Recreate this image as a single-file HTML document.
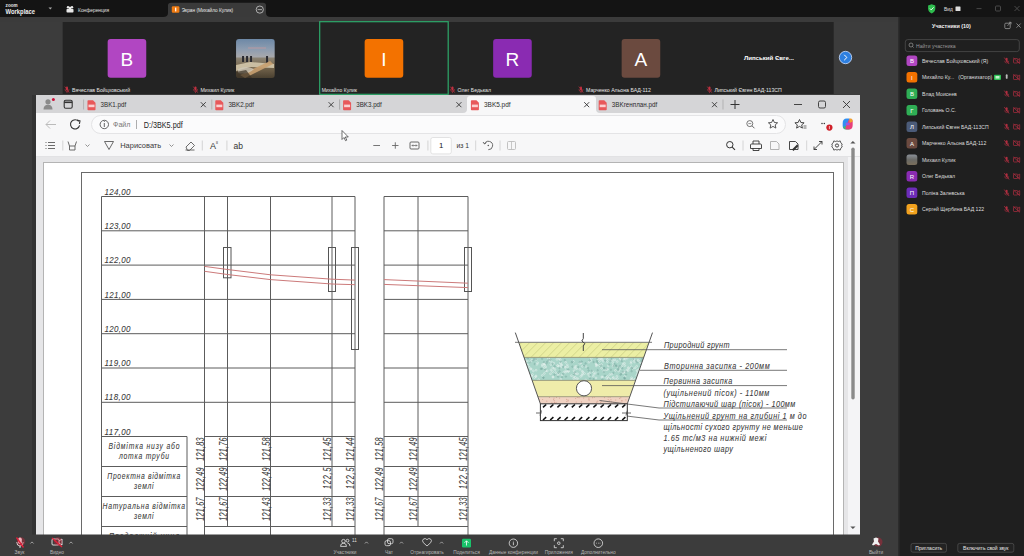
<!DOCTYPE html>
<html><head><meta charset="utf-8">
<style>
*{margin:0;padding:0;box-sizing:border-box}
html,body{width:1024px;height:556px;overflow:hidden;background:#3c3c3c;font-family:"Liberation Sans",sans-serif}
.a{position:absolute;left:0;top:0}
.t{font-family:"Liberation Sans",sans-serif;font-style:italic;fill:#3a3a3a;stroke:#3a3a3a;stroke-width:0.06px}
</style></head><body>
<svg class="a" width="1024" height="556" viewBox="0 0 1024 556">
<rect x="0" y="0" width="1024" height="556" fill="#3c3c3c"/>
<rect x="0" y="0" width="1024" height="17" fill="#141414"/>
<text x="5.6" y="6.8" font-size="5.4" fill="#e8e8e8" font-family="Liberation Sans" font-weight="bold" textLength="12" lengthAdjust="spacingAndGlyphs">zoom</text>
<text x="5.6" y="14" font-size="7" fill="#f0f0f0" font-family="Liberation Sans" font-weight="bold" textLength="29.5" lengthAdjust="spacingAndGlyphs">Workplace</text>
<path d="M48.5,7.6 l1.8,1.8 1.8,-1.8z" fill="#aaa"/>
<g fill="#e8e8e8"><circle cx="68" cy="7.3" r="1.2"/><circle cx="72" cy="7.3" r="1.2"/><rect x="66.5" y="9" width="7" height="3.6" rx="0.8"/><rect x="68.7" y="6.8" width="2.6" height="2.6" rx="0.5"/></g>
<text x="78.1" y="11.7" font-size="6" fill="#e0e0e0" font-family="Liberation Sans" textLength="31" lengthAdjust="spacingAndGlyphs">Конференция</text>
<path d="M163,17 Q168,17 168,13 L168,5.5 Q168,2.8 171,2.8 L263,2.8 Q266,2.8 266,5.5 L266,13 Q266,17 271,17 Z" fill="#3a3a3a"/>
<rect x="171.8" y="6.2" width="7.6" height="6.6" rx="1.2" fill="#f07b12"/><rect x="175.1" y="7.6" width="1.2" height="3.8" fill="#fff"/>
<text x="181.7" y="11.8" font-size="6" fill="#e8e8e8" font-family="Liberation Sans" textLength="51.5" lengthAdjust="spacingAndGlyphs">Экран (Михайло Кулик)</text>
<circle cx="259.8" cy="9.6" r="3.6" fill="none" stroke="#bbb" stroke-width="0.9"/><line x1="257.6" y1="9.6" x2="262" y2="9.6" stroke="#bbb" stroke-width="0.8"/>
<path d="M931.7,4.2 l3.6,1.3 v3 q0,3.4 -3.6,5 q-3.6,-1.6 -3.6,-5 v-3z" fill="#2ebd4e"/><path d="M930,8.6 l1.2,1.3 2.4,-2.6" fill="none" stroke="#fff" stroke-width="0.9"/>
<text x="944" y="10.8" font-size="5.8" fill="#e0e0e0" font-family="Liberation Sans" textLength="8.7" lengthAdjust="spacingAndGlyphs">Вид</text>
<rect x="955.5" y="6.5" width="5" height="4.5" rx="0.5" fill="#ddd"/>
<line x1="976.5" y1="8.6" x2="981.5" y2="8.6" stroke="#555" stroke-width="0.8"/>
<rect x="995.5" y="6" width="5" height="5" rx="1" fill="none" stroke="#555" stroke-width="0.8"/>
<path d="M1014.5,6 l5,5 m0,-5 l-5,5" stroke="#555" stroke-width="0.8"/>
<rect x="0" y="17" width="898" height="5" fill="#3b3b3b"/>
<rect x="62.7" y="22" width="771" height="72" fill="#232323"/>
<rect x="107.65" y="39" width="38.6" height="38.8" rx="3" fill="#b146c2"/>
<text x="126.95" y="65.5" font-size="19" fill="#fff" font-family="Liberation Sans" text-anchor="middle">B</text>
<g transform="translate(67.0,89.6)"><rect x="-1" y="-3" width="2" height="4" rx="1" fill="#c23040"/><path d="M-2,-0.5 q0,2.5 2,2.5 q2,0 2,-2.5 M0,2 v1.5" fill="none" stroke="#c23040" stroke-width="0.6"/><line x1="-2.2" y1="-3" x2="2.2" y2="3" stroke="#c23040" stroke-width="0.7"/></g>
<text x="72.0" y="91.8" font-size="5.2" fill="#e6e6e6" font-family="Liberation Sans">Вячеслав Бойцховський</text>
<defs><linearGradient id="ph" x1="0" y1="0" x2="0" y2="1"><stop offset="0" stop-color="#6d88a6"/><stop offset="0.25" stop-color="#8c9cb0"/><stop offset="0.45" stop-color="#a6a8ac"/><stop offset="0.5" stop-color="#8a8272"/><stop offset="0.7" stop-color="#7a6a50"/><stop offset="1" stop-color="#4a4030"/></linearGradient><clipPath id="phc"><rect x="236.0" y="39" width="38.8" height="39" rx="3"/></clipPath></defs>
<g clip-path="url(#phc)">
<rect x="236.04999999999998" y="39" width="38.8" height="39" fill="url(#ph)"/>
<path d="M248.04999999999998,48 h18" stroke="#c09aa0" stroke-width="1.5" opacity="0.6"/>
<path d="M243.04999999999998,62 v-6 M247.04999999999998,62 v-6 M251.04999999999998,62 v-6 M267.04999999999995,63 v-7" stroke="#2a2a30" stroke-width="2"/>
<path d="M236.04999999999998,65 l14,-3 24,2 v4 l-24,-1 -14,4z" fill="#d8cdb0" opacity="0.85"/>
<path d="M240.04999999999998,75 l30,-14 3,3 -28,14z" fill="#c8a070" opacity="0.9"/>
<path d="M238.04999999999998,69 q8,-4 16,0 q-6,6 -16,4z" fill="#d0c8b8" opacity="0.8"/>
<path d="M236.04999999999998,72 l10,-2 6,8 h-16z" fill="#3a3024" opacity="0.7"/>
</g>
<g transform="translate(195.5,89.6)"><rect x="-1" y="-3" width="2" height="4" rx="1" fill="#c23040"/><path d="M-2,-0.5 q0,2.5 2,2.5 q2,0 2,-2.5 M0,2 v1.5" fill="none" stroke="#c23040" stroke-width="0.6"/><line x1="-2.2" y1="-3" x2="2.2" y2="3" stroke="#c23040" stroke-width="0.7"/></g>
<text x="200.5" y="91.8" font-size="5.2" fill="#e6e6e6" font-family="Liberation Sans">Михаил Кулик</text>
<rect x="364.65" y="39" width="38.6" height="38.8" rx="3" fill="#f37200"/>
<text x="383.95" y="65.5" font-size="19" fill="#fff" font-family="Liberation Sans" text-anchor="middle">I</text>
<text x="321.7" y="91.8" font-size="5.2" fill="#e6e6e6" font-family="Liberation Sans" textLength="35.2" lengthAdjust="spacingAndGlyphs">Михайло Кулик</text>
<rect x="493.15000000000003" y="39" width="38.6" height="38.8" rx="3" fill="#8a2bb2"/>
<text x="512.45" y="65.5" font-size="19" fill="#fff" font-family="Liberation Sans" text-anchor="middle">R</text>
<g transform="translate(452.5,89.6)"><rect x="-1" y="-3" width="2" height="4" rx="1" fill="#c23040"/><path d="M-2,-0.5 q0,2.5 2,2.5 q2,0 2,-2.5 M0,2 v1.5" fill="none" stroke="#c23040" stroke-width="0.6"/><line x1="-2.2" y1="-3" x2="2.2" y2="3" stroke="#c23040" stroke-width="0.7"/></g>
<text x="457.5" y="91.8" font-size="5.2" fill="#e6e6e6" font-family="Liberation Sans">Олег Бедькал</text>
<rect x="621.6500000000001" y="39" width="38.6" height="38.8" rx="3" fill="#6b4a3f"/>
<text x="640.95" y="65.5" font-size="19" fill="#fff" font-family="Liberation Sans" text-anchor="middle">A</text>
<g transform="translate(581.0,89.6)"><rect x="-1" y="-3" width="2" height="4" rx="1" fill="#c23040"/><path d="M-2,-0.5 q0,2.5 2,2.5 q2,0 2,-2.5 M0,2 v1.5" fill="none" stroke="#c23040" stroke-width="0.6"/><line x1="-2.2" y1="-3" x2="2.2" y2="3" stroke="#c23040" stroke-width="0.7"/></g>
<text x="586.0" y="91.8" font-size="5.2" fill="#e6e6e6" font-family="Liberation Sans">Марченко Альона БАД-112</text>
<g transform="translate(709.5,89.6)"><rect x="-1" y="-3" width="2" height="4" rx="1" fill="#c23040"/><path d="M-2,-0.5 q0,2.5 2,2.5 q2,0 2,-2.5 M0,2 v1.5" fill="none" stroke="#c23040" stroke-width="0.6"/><line x1="-2.2" y1="-3" x2="2.2" y2="3" stroke="#c23040" stroke-width="0.7"/></g>
<text x="714.5" y="91.8" font-size="5.2" fill="#e6e6e6" font-family="Liberation Sans">Липський Євген БАД-113СП</text>
<text x="769" y="60.3" font-size="6.1" fill="#fff" font-family="Liberation Sans" font-weight="bold" text-anchor="middle">Липський Євге...</text>
<rect x="319.7" y="21.7" width="128.5" height="72.6" fill="none" stroke="#2da86a" stroke-width="1.2"/>
<circle cx="845.5" cy="57.5" r="6.2" fill="#2d7fe0" stroke="#cfe0ff" stroke-width="0.8"/><path d="M844.2,54.8 l2.7,2.7 -2.7,2.7" fill="none" stroke="#fff" stroke-width="1"/>
<rect x="32" y="95" width="4" height="440" fill="#333"/>
<svg x="36" y="95" width="824" height="440" viewBox="36 95 824 440">
<rect x="36" y="95" width="824" height="440" fill="#e6e6e8"/>
<rect x="43.5" y="162.5" width="800" height="400" fill="#fff" stroke="#b4b4b4" stroke-width="1"/>
<rect x="848" y="157" width="12" height="378" fill="#f4f4f6"/>
<rect x="81.5" y="172.5" width="752" height="400" fill="none" stroke="#6a6a6a" stroke-width="1"/>
<line x1="101.5" y1="196.5" x2="355" y2="196.5" stroke="#5c5c5c" stroke-width="1"/>
<line x1="384" y1="196.5" x2="468" y2="196.5" stroke="#5c5c5c" stroke-width="1"/>
<line x1="101.5" y1="230.8" x2="355" y2="230.8" stroke="#5c5c5c" stroke-width="1"/>
<line x1="384" y1="230.8" x2="468" y2="230.8" stroke="#5c5c5c" stroke-width="1"/>
<line x1="101.5" y1="265.1" x2="355" y2="265.1" stroke="#5c5c5c" stroke-width="1"/>
<line x1="384" y1="265.1" x2="468" y2="265.1" stroke="#5c5c5c" stroke-width="1"/>
<line x1="101.5" y1="299.4" x2="355" y2="299.4" stroke="#5c5c5c" stroke-width="1"/>
<line x1="384" y1="299.4" x2="468" y2="299.4" stroke="#5c5c5c" stroke-width="1"/>
<line x1="101.5" y1="333.7" x2="355" y2="333.7" stroke="#5c5c5c" stroke-width="1"/>
<line x1="384" y1="333.7" x2="468" y2="333.7" stroke="#5c5c5c" stroke-width="1"/>
<line x1="101.5" y1="368.0" x2="355" y2="368.0" stroke="#5c5c5c" stroke-width="1"/>
<line x1="384" y1="368.0" x2="468" y2="368.0" stroke="#5c5c5c" stroke-width="1"/>
<line x1="101.5" y1="402.3" x2="355" y2="402.3" stroke="#5c5c5c" stroke-width="1"/>
<line x1="384" y1="402.3" x2="468" y2="402.3" stroke="#5c5c5c" stroke-width="1"/>
<line x1="101.5" y1="436.5" x2="187" y2="436.5" stroke="#5c5c5c" stroke-width="1"/>
<line x1="204.5" y1="436.5" x2="355" y2="436.5" stroke="#5c5c5c" stroke-width="1"/>
<line x1="384" y1="436.5" x2="468" y2="436.5" stroke="#5c5c5c" stroke-width="1"/>
<line x1="101.5" y1="466.5" x2="187" y2="466.5" stroke="#5c5c5c" stroke-width="1"/>
<line x1="204.5" y1="466.5" x2="355" y2="466.5" stroke="#5c5c5c" stroke-width="1"/>
<line x1="384" y1="466.5" x2="468" y2="466.5" stroke="#5c5c5c" stroke-width="1"/>
<line x1="101.5" y1="496.5" x2="187" y2="496.5" stroke="#5c5c5c" stroke-width="1"/>
<line x1="204.5" y1="496.5" x2="355" y2="496.5" stroke="#5c5c5c" stroke-width="1"/>
<line x1="384" y1="496.5" x2="468" y2="496.5" stroke="#5c5c5c" stroke-width="1"/>
<line x1="101.5" y1="526.5" x2="187" y2="526.5" stroke="#5c5c5c" stroke-width="1"/>
<line x1="204.5" y1="526.5" x2="355" y2="526.5" stroke="#5c5c5c" stroke-width="1"/>
<line x1="384" y1="526.5" x2="468" y2="526.5" stroke="#5c5c5c" stroke-width="1"/>
<line x1="101.5" y1="196.5" x2="101.5" y2="560" stroke="#5c5c5c" stroke-width="1"/>
<line x1="187" y1="436.5" x2="187" y2="560" stroke="#5c5c5c" stroke-width="1"/>
<line x1="204.5" y1="196.5" x2="204.5" y2="560" stroke="#5c5c5c" stroke-width="1"/>
<line x1="227.5" y1="196.5" x2="227.5" y2="526.5" stroke="#5c5c5c" stroke-width="1"/>
<line x1="270.5" y1="196.5" x2="270.5" y2="560" stroke="#5c5c5c" stroke-width="1"/>
<line x1="332" y1="196.5" x2="332" y2="526.5" stroke="#5c5c5c" stroke-width="1"/>
<line x1="355" y1="196.5" x2="355" y2="560" stroke="#5c5c5c" stroke-width="1"/>
<line x1="384" y1="196.5" x2="384" y2="560" stroke="#5c5c5c" stroke-width="1"/>
<line x1="418" y1="196.5" x2="418" y2="526.5" stroke="#5c5c5c" stroke-width="1"/>
<line x1="468" y1="196.5" x2="468" y2="560" stroke="#5c5c5c" stroke-width="1"/>
<rect x="223.5" y="247.5" width="7.5" height="30.30000000000001" fill="none" stroke="#555" stroke-width="1"/>
<rect x="328.5" y="247.5" width="7.0" height="44.0" fill="none" stroke="#555" stroke-width="1"/>
<rect x="351.5" y="247.5" width="7.0" height="102.0" fill="none" stroke="#555" stroke-width="1"/>
<rect x="464.5" y="247.5" width="7.0" height="44.0" fill="none" stroke="#555" stroke-width="1"/>
<polyline points="204.5,266.4 227.5,269.5 270.5,274.8 332,279.2 355,280.1" fill="none" stroke="#cc7a7a" stroke-width="1"/>
<polyline points="204.5,271.3 227.5,274.5 270.5,279.6 332,284 355,284.7" fill="none" stroke="#cc7a7a" stroke-width="1"/>
<polyline points="384,279.6 468,283.2" fill="none" stroke="#cc7a7a" stroke-width="1"/>
<polyline points="384,284.4 468,287.6" fill="none" stroke="#cc7a7a" stroke-width="1"/>
<text transform="translate(104.5,194.6) scale(1,1.22)" class="t" stroke-width="0.2" font-size="8" textLength="26" lengthAdjust="spacing">124,00</text>
<text transform="translate(104.5,228.9) scale(1,1.22)" class="t" stroke-width="0.2" font-size="8" textLength="26" lengthAdjust="spacing">123,00</text>
<text transform="translate(104.5,263.20000000000005) scale(1,1.22)" class="t" stroke-width="0.2" font-size="8" textLength="26" lengthAdjust="spacing">122,00</text>
<text transform="translate(104.5,297.5) scale(1,1.22)" class="t" stroke-width="0.2" font-size="8" textLength="26" lengthAdjust="spacing">121,00</text>
<text transform="translate(104.5,331.8) scale(1,1.22)" class="t" stroke-width="0.2" font-size="8" textLength="26" lengthAdjust="spacing">120,00</text>
<text transform="translate(104.5,366.1) scale(1,1.22)" class="t" stroke-width="0.2" font-size="8" textLength="26" lengthAdjust="spacing">119,00</text>
<text transform="translate(104.5,400.40000000000003) scale(1,1.22)" class="t" stroke-width="0.2" font-size="8" textLength="26" lengthAdjust="spacing">118,00</text>
<text transform="translate(104.5,434.6) scale(1,1.22)" class="t" stroke-width="0.2" font-size="8" textLength="26" lengthAdjust="spacing">117,00</text>
<text transform="translate(108.5,448.5) scale(1,1.22)" class="t" font-size="6.8" textLength="71" lengthAdjust="spacing">Відмітка низу або</text>
<text transform="translate(119.0,458.5) scale(1,1.22)" class="t" font-size="6.8" textLength="50" lengthAdjust="spacing">лотка труби</text>
<text transform="translate(107.30000000000001,479) scale(1,1.22)" class="t" font-size="6.8" textLength="73" lengthAdjust="spacing">Проектна відмітка</text>
<text transform="translate(134.05,488.5) scale(1,1.22)" class="t" font-size="6.8" textLength="19.5" lengthAdjust="spacing">землі</text>
<text transform="translate(102.55000000000001,509) scale(1,1.22)" class="t" font-size="6.8" textLength="82.5" lengthAdjust="spacing">Натуральна відмітка</text>
<text transform="translate(134.05,518.5) scale(1,1.22)" class="t" font-size="6.8" textLength="19.5" lengthAdjust="spacing">землі</text>
<text transform="translate(109.0,539) scale(1,1.22)" class="t" font-size="6.8" textLength="70" lengthAdjust="spacing">Поздовжній ухил</text>
<text transform="translate(203.7,437.5) rotate(-90) scale(1,1.4)" text-anchor="end" class="t" stroke="#3a3a3a" stroke-width="0.15" font-size="7.2" textLength="23.3" lengthAdjust="spacing">121,83</text>
<text transform="translate(226.7,437.5) rotate(-90) scale(1,1.4)" text-anchor="end" class="t" stroke="#3a3a3a" stroke-width="0.15" font-size="7.2" textLength="23.3" lengthAdjust="spacing">121,76</text>
<text transform="translate(269.7,437.5) rotate(-90) scale(1,1.4)" text-anchor="end" class="t" stroke="#3a3a3a" stroke-width="0.15" font-size="7.2" textLength="23.3" lengthAdjust="spacing">121,58</text>
<text transform="translate(331.2,437.5) rotate(-90) scale(1,1.4)" text-anchor="end" class="t" stroke="#3a3a3a" stroke-width="0.15" font-size="7.2" textLength="23.3" lengthAdjust="spacing">121,45</text>
<text transform="translate(354.2,437.5) rotate(-90) scale(1,1.4)" text-anchor="end" class="t" stroke="#3a3a3a" stroke-width="0.15" font-size="7.2" textLength="23.3" lengthAdjust="spacing">121,44</text>
<text transform="translate(383.2,437.5) rotate(-90) scale(1,1.4)" text-anchor="end" class="t" stroke="#3a3a3a" stroke-width="0.15" font-size="7.2" textLength="23.3" lengthAdjust="spacing">121,58</text>
<text transform="translate(417.2,437.5) rotate(-90) scale(1,1.4)" text-anchor="end" class="t" stroke="#3a3a3a" stroke-width="0.15" font-size="7.2" textLength="23.3" lengthAdjust="spacing">121,49</text>
<text transform="translate(467.2,437.5) rotate(-90) scale(1,1.4)" text-anchor="end" class="t" stroke="#3a3a3a" stroke-width="0.15" font-size="7.2" textLength="23.3" lengthAdjust="spacing">121,45</text>
<text transform="translate(203.7,467.5) rotate(-90) scale(1,1.4)" text-anchor="end" class="t" stroke="#3a3a3a" stroke-width="0.15" font-size="7.2" textLength="23.3" lengthAdjust="spacing">122,49</text>
<text transform="translate(226.7,467.5) rotate(-90) scale(1,1.4)" text-anchor="end" class="t" stroke="#3a3a3a" stroke-width="0.15" font-size="7.2" textLength="23.3" lengthAdjust="spacing">122,49</text>
<text transform="translate(269.7,467.5) rotate(-90) scale(1,1.4)" text-anchor="end" class="t" stroke="#3a3a3a" stroke-width="0.15" font-size="7.2" textLength="23.3" lengthAdjust="spacing">122,49</text>
<text transform="translate(331.2,467.5) rotate(-90) scale(1,1.4)" text-anchor="end" class="t" stroke="#3a3a3a" stroke-width="0.15" font-size="7.2" textLength="21.6" lengthAdjust="spacing">122,5</text>
<text transform="translate(354.2,467.5) rotate(-90) scale(1,1.4)" text-anchor="end" class="t" stroke="#3a3a3a" stroke-width="0.15" font-size="7.2" textLength="21.6" lengthAdjust="spacing">122,5</text>
<text transform="translate(383.2,467.5) rotate(-90) scale(1,1.4)" text-anchor="end" class="t" stroke="#3a3a3a" stroke-width="0.15" font-size="7.2" textLength="23.3" lengthAdjust="spacing">122,49</text>
<text transform="translate(417.2,467.5) rotate(-90) scale(1,1.4)" text-anchor="end" class="t" stroke="#3a3a3a" stroke-width="0.15" font-size="7.2" textLength="23.3" lengthAdjust="spacing">122,49</text>
<text transform="translate(467.2,467.5) rotate(-90) scale(1,1.4)" text-anchor="end" class="t" stroke="#3a3a3a" stroke-width="0.15" font-size="7.2" textLength="21.6" lengthAdjust="spacing">122,5</text>
<text transform="translate(203.7,497.5) rotate(-90) scale(1,1.4)" text-anchor="end" class="t" stroke="#3a3a3a" stroke-width="0.15" font-size="7.2" textLength="23.3" lengthAdjust="spacing">121,67</text>
<text transform="translate(226.7,497.5) rotate(-90) scale(1,1.4)" text-anchor="end" class="t" stroke="#3a3a3a" stroke-width="0.15" font-size="7.2" textLength="23.3" lengthAdjust="spacing">121,67</text>
<text transform="translate(269.7,497.5) rotate(-90) scale(1,1.4)" text-anchor="end" class="t" stroke="#3a3a3a" stroke-width="0.15" font-size="7.2" textLength="23.3" lengthAdjust="spacing">121,43</text>
<text transform="translate(331.2,497.5) rotate(-90) scale(1,1.4)" text-anchor="end" class="t" stroke="#3a3a3a" stroke-width="0.15" font-size="7.2" textLength="23.3" lengthAdjust="spacing">121,33</text>
<text transform="translate(354.2,497.5) rotate(-90) scale(1,1.4)" text-anchor="end" class="t" stroke="#3a3a3a" stroke-width="0.15" font-size="7.2" textLength="23.3" lengthAdjust="spacing">121,33</text>
<text transform="translate(383.2,497.5) rotate(-90) scale(1,1.4)" text-anchor="end" class="t" stroke="#3a3a3a" stroke-width="0.15" font-size="7.2" textLength="23.3" lengthAdjust="spacing">121,67</text>
<text transform="translate(417.2,497.5) rotate(-90) scale(1,1.4)" text-anchor="end" class="t" stroke="#3a3a3a" stroke-width="0.15" font-size="7.2" textLength="23.3" lengthAdjust="spacing">121,67</text>
<text transform="translate(467.2,497.5) rotate(-90) scale(1,1.4)" text-anchor="end" class="t" stroke="#3a3a3a" stroke-width="0.15" font-size="7.2" textLength="23.3" lengthAdjust="spacing">121,33</text>
<polygon points="518.7,342.3 649.1,342.3 643.7,357.4 524.0,357.4" fill="#ecefa4" />
<polygon points="524.0,357.4 643.7,357.4 635.6,380.4 532.2,380.4" fill="#a9d5c9" />
<polygon points="532.2,380.4 635.6,380.4 629.8,396.7 537.9,396.7" fill="#efecaa" />
<polygon points="537.9,396.7 629.8,396.7 627.3,403.8 540.4,403.8" fill="#f0d2c2" />
<clipPath id="c1"><polygon points="518.7,342.3 649.1,342.3 643.7,357.4 524.0,357.4"/></clipPath>
<g clip-path="url(#c1)" stroke="#cfd488" stroke-width="0.9"><line x1="499" y1="357.4" x2="514" y2="342.3"/><line x1="507" y1="357.4" x2="522" y2="342.3"/><line x1="515" y1="357.4" x2="530" y2="342.3"/><line x1="523" y1="357.4" x2="538" y2="342.3"/><line x1="531" y1="357.4" x2="546" y2="342.3"/><line x1="539" y1="357.4" x2="554" y2="342.3"/><line x1="547" y1="357.4" x2="562" y2="342.3"/><line x1="555" y1="357.4" x2="570" y2="342.3"/><line x1="563" y1="357.4" x2="578" y2="342.3"/><line x1="571" y1="357.4" x2="586" y2="342.3"/><line x1="579" y1="357.4" x2="594" y2="342.3"/><line x1="587" y1="357.4" x2="602" y2="342.3"/><line x1="595" y1="357.4" x2="610" y2="342.3"/><line x1="603" y1="357.4" x2="618" y2="342.3"/><line x1="611" y1="357.4" x2="626" y2="342.3"/><line x1="619" y1="357.4" x2="634" y2="342.3"/><line x1="627" y1="357.4" x2="642" y2="342.3"/><line x1="635" y1="357.4" x2="650" y2="342.3"/><line x1="643" y1="357.4" x2="658" y2="342.3"/><line x1="651" y1="357.4" x2="666" y2="342.3"/><line x1="659" y1="357.4" x2="674" y2="342.3"/><line x1="667" y1="357.4" x2="682" y2="342.3"/><line x1="675" y1="357.4" x2="690" y2="342.3"/><line x1="683" y1="357.4" x2="698" y2="342.3"/></g>
<clipPath id="c2"><polygon points="524.0,357.4 643.7,357.4 635.6,380.4 532.2,380.4"/></clipPath>
<g clip-path="url(#c2)" fill="none" stroke="#e4f2ee" stroke-width="0.6"><circle cx="550.9" cy="370.0" r="0.9"/><circle cx="568.1" cy="371.3" r="0.9"/><circle cx="601.3" cy="359.4" r="0.9"/><circle cx="521.7" cy="376.4" r="0.9"/><circle cx="553.7" cy="363.2" r="0.9"/><circle cx="649.4" cy="368.3" r="0.9"/><circle cx="628.7" cy="368.5" r="0.9"/><circle cx="603.1" cy="361.3" r="0.9"/><circle cx="602.5" cy="377.1" r="0.9"/><circle cx="588.0" cy="374.3" r="0.9"/><circle cx="607.3" cy="359.4" r="0.9"/><circle cx="618.6" cy="371.0" r="0.9"/><circle cx="559.2" cy="358.7" r="0.9"/><circle cx="632.5" cy="368.4" r="0.9"/><circle cx="613.4" cy="377.3" r="0.9"/><circle cx="612.8" cy="378.3" r="0.9"/><circle cx="571.3" cy="375.6" r="0.9"/><circle cx="577.8" cy="378.6" r="0.9"/><circle cx="634.3" cy="360.1" r="0.9"/><circle cx="537.7" cy="362.8" r="0.9"/><circle cx="645.5" cy="367.6" r="0.9"/><circle cx="601.5" cy="364.6" r="0.9"/><circle cx="585.9" cy="366.5" r="0.9"/><circle cx="565.6" cy="370.9" r="0.9"/><circle cx="596.0" cy="377.9" r="0.9"/><circle cx="608.7" cy="378.4" r="0.9"/><circle cx="631.3" cy="379.8" r="0.9"/><circle cx="607.3" cy="361.6" r="0.9"/><circle cx="631.9" cy="379.2" r="0.9"/><circle cx="637.6" cy="370.5" r="0.9"/><circle cx="612.8" cy="362.6" r="0.9"/><circle cx="628.1" cy="370.6" r="0.9"/><circle cx="557.0" cy="359.4" r="0.9"/><circle cx="631.0" cy="379.8" r="0.9"/><circle cx="531.5" cy="375.6" r="0.9"/><circle cx="573.4" cy="361.3" r="0.9"/><circle cx="558.2" cy="374.9" r="0.9"/><circle cx="633.5" cy="359.0" r="0.9"/><circle cx="599.9" cy="359.0" r="0.9"/><circle cx="613.4" cy="365.3" r="0.9"/><circle cx="634.5" cy="379.6" r="0.9"/><circle cx="585.7" cy="380.0" r="0.9"/><circle cx="560.3" cy="359.7" r="0.9"/><circle cx="598.0" cy="358.7" r="0.9"/><circle cx="545.7" cy="367.0" r="0.9"/><circle cx="599.4" cy="361.4" r="0.9"/><circle cx="525.5" cy="377.1" r="0.9"/><circle cx="560.8" cy="379.1" r="0.9"/><circle cx="636.6" cy="366.3" r="0.9"/><circle cx="579.9" cy="369.4" r="0.9"/><circle cx="603.7" cy="371.1" r="0.9"/><circle cx="592.7" cy="371.6" r="0.9"/><circle cx="642.3" cy="369.2" r="0.9"/><circle cx="576.1" cy="373.8" r="0.9"/><circle cx="550.9" cy="364.6" r="0.9"/><circle cx="647.1" cy="369.5" r="0.9"/><circle cx="591.3" cy="358.3" r="0.9"/><circle cx="574.0" cy="370.8" r="0.9"/><circle cx="522.6" cy="371.5" r="0.9"/><circle cx="602.2" cy="359.3" r="0.9"/><circle cx="601.6" cy="368.3" r="0.9"/><circle cx="608.3" cy="365.8" r="0.9"/><circle cx="611.9" cy="374.2" r="0.9"/><circle cx="522.9" cy="359.3" r="0.9"/><circle cx="607.9" cy="379.2" r="0.9"/><circle cx="552.6" cy="368.0" r="0.9"/><circle cx="597.0" cy="365.0" r="0.9"/><circle cx="567.3" cy="364.9" r="0.9"/><circle cx="568.0" cy="371.1" r="0.9"/><circle cx="559.1" cy="366.3" r="0.9"/><circle cx="620.4" cy="358.6" r="0.9"/><circle cx="594.0" cy="374.2" r="0.9"/><circle cx="560.3" cy="362.9" r="0.9"/><circle cx="624.5" cy="363.3" r="0.9"/><circle cx="544.4" cy="367.6" r="0.9"/><circle cx="610.7" cy="360.2" r="0.9"/><circle cx="561.9" cy="365.3" r="0.9"/><circle cx="628.4" cy="367.6" r="0.9"/><circle cx="631.2" cy="361.7" r="0.9"/><circle cx="563.8" cy="372.3" r="0.9"/><circle cx="635.0" cy="367.9" r="0.9"/><circle cx="549.3" cy="360.7" r="0.9"/><circle cx="588.9" cy="362.2" r="0.9"/><circle cx="624.9" cy="376.4" r="0.9"/><circle cx="543.9" cy="364.1" r="0.9"/><circle cx="624.9" cy="372.1" r="0.9"/><circle cx="624.8" cy="365.6" r="0.9"/><circle cx="536.9" cy="364.4" r="0.9"/><circle cx="623.2" cy="364.0" r="0.9"/><circle cx="565.0" cy="367.2" r="0.9"/><circle cx="574.6" cy="367.0" r="0.9"/><circle cx="639.7" cy="361.4" r="0.9"/><circle cx="520.6" cy="378.8" r="0.9"/><circle cx="634.4" cy="379.7" r="0.9"/><circle cx="576.5" cy="378.9" r="0.9"/><circle cx="640.6" cy="362.9" r="0.9"/><circle cx="616.9" cy="376.4" r="0.9"/><circle cx="606.2" cy="369.4" r="0.9"/><circle cx="557.6" cy="365.5" r="0.9"/><circle cx="549.6" cy="359.5" r="0.9"/><circle cx="596.5" cy="364.3" r="0.9"/><circle cx="625.3" cy="359.0" r="0.9"/><circle cx="637.5" cy="373.3" r="0.9"/><circle cx="640.1" cy="377.7" r="0.9"/><circle cx="637.0" cy="370.7" r="0.9"/><circle cx="521.7" cy="374.4" r="0.9"/><circle cx="542.3" cy="364.6" r="0.9"/><circle cx="606.2" cy="369.5" r="0.9"/><circle cx="573.8" cy="378.7" r="0.9"/><circle cx="599.6" cy="365.5" r="0.9"/><circle cx="552.8" cy="377.0" r="0.9"/><circle cx="582.0" cy="375.2" r="0.9"/><circle cx="565.7" cy="362.3" r="0.9"/><circle cx="589.5" cy="376.0" r="0.9"/><circle cx="542.3" cy="375.4" r="0.9"/><circle cx="639.8" cy="375.7" r="0.9"/><circle cx="627.1" cy="358.2" r="0.9"/><circle cx="601.7" cy="377.0" r="0.9"/><circle cx="526.5" cy="364.0" r="0.9"/><circle cx="554.9" cy="369.6" r="0.9"/><circle cx="575.0" cy="368.4" r="0.9"/><circle cx="620.9" cy="358.0" r="0.9"/><circle cx="527.1" cy="360.8" r="0.9"/><circle cx="536.2" cy="359.5" r="0.9"/><circle cx="646.7" cy="376.8" r="0.9"/><circle cx="531.2" cy="369.0" r="0.9"/><circle cx="561.1" cy="364.9" r="0.9"/><circle cx="565.7" cy="372.2" r="0.9"/><circle cx="596.3" cy="365.9" r="0.9"/><circle cx="544.8" cy="365.2" r="0.9"/><circle cx="536.1" cy="370.2" r="0.9"/><circle cx="613.1" cy="366.4" r="0.9"/><circle cx="530.4" cy="361.9" r="0.9"/><circle cx="568.5" cy="371.3" r="0.9"/><circle cx="621.7" cy="366.4" r="0.9"/><circle cx="624.2" cy="371.7" r="0.9"/><circle cx="576.1" cy="366.2" r="0.9"/><circle cx="584.5" cy="373.5" r="0.9"/><circle cx="574.7" cy="373.3" r="0.9"/><circle cx="579.9" cy="363.4" r="0.9"/><circle cx="589.7" cy="373.3" r="0.9"/><circle cx="529.3" cy="367.3" r="0.9"/><circle cx="575.4" cy="377.4" r="0.9"/><circle cx="641.7" cy="366.2" r="0.9"/><circle cx="636.7" cy="375.4" r="0.9"/><circle cx="554.1" cy="368.2" r="0.9"/><circle cx="536.0" cy="375.9" r="0.9"/><circle cx="606.1" cy="377.5" r="0.9"/><circle cx="623.0" cy="372.7" r="0.9"/><circle cx="615.4" cy="370.4" r="0.9"/><circle cx="533.4" cy="370.9" r="0.9"/><circle cx="520.6" cy="361.2" r="0.9"/><circle cx="620.7" cy="359.0" r="0.9"/><circle cx="531.9" cy="360.2" r="0.9"/><circle cx="634.5" cy="361.9" r="0.9"/><circle cx="523.1" cy="376.5" r="0.9"/><circle cx="535.8" cy="376.6" r="0.9"/><circle cx="607.6" cy="376.4" r="0.9"/><circle cx="643.8" cy="370.7" r="0.9"/><circle cx="623.8" cy="358.8" r="0.9"/><circle cx="619.8" cy="369.2" r="0.9"/><circle cx="613.0" cy="360.3" r="0.9"/><circle cx="617.4" cy="378.6" r="0.9"/><circle cx="527.9" cy="365.1" r="0.9"/><circle cx="593.3" cy="376.2" r="0.9"/><circle cx="551.5" cy="362.0" r="0.9"/><circle cx="552.5" cy="371.6" r="0.9"/><circle cx="618.0" cy="366.7" r="0.9"/><circle cx="567.8" cy="366.7" r="0.9"/><circle cx="565.5" cy="367.2" r="0.9"/><circle cx="530.8" cy="369.0" r="0.9"/><circle cx="646.5" cy="367.1" r="0.9"/><circle cx="617.2" cy="361.5" r="0.9"/><circle cx="609.8" cy="374.6" r="0.9"/><circle cx="607.6" cy="369.4" r="0.9"/><circle cx="582.9" cy="372.1" r="0.9"/><circle cx="636.7" cy="361.3" r="0.9"/><circle cx="532.5" cy="374.5" r="0.9"/><circle cx="639.2" cy="369.4" r="0.9"/><circle cx="577.6" cy="373.8" r="0.9"/><circle cx="544.2" cy="363.9" r="0.9"/><circle cx="545.9" cy="370.9" r="0.9"/><circle cx="560.9" cy="363.1" r="0.9"/><circle cx="609.8" cy="379.0" r="0.9"/><circle cx="558.5" cy="373.5" r="0.9"/><circle cx="573.7" cy="376.8" r="0.9"/><circle cx="596.0" cy="363.9" r="0.9"/><circle cx="548.3" cy="358.5" r="0.9"/><circle cx="582.3" cy="366.4" r="0.9"/><circle cx="542.4" cy="365.9" r="0.9"/><circle cx="561.9" cy="375.0" r="0.9"/><circle cx="538.7" cy="379.8" r="0.9"/><circle cx="582.3" cy="371.2" r="0.9"/><circle cx="580.8" cy="376.4" r="0.9"/><circle cx="626.8" cy="370.3" r="0.9"/><circle cx="582.6" cy="373.9" r="0.9"/><circle cx="631.4" cy="366.8" r="0.9"/><circle cx="615.4" cy="379.1" r="0.9"/><circle cx="580.8" cy="363.1" r="0.9"/><circle cx="550.5" cy="373.8" r="0.9"/><circle cx="607.8" cy="379.1" r="0.9"/><circle cx="631.0" cy="363.3" r="0.9"/><circle cx="544.7" cy="363.7" r="0.9"/><circle cx="544.3" cy="373.5" r="0.9"/><circle cx="631.6" cy="377.8" r="0.9"/><circle cx="553.2" cy="377.0" r="0.9"/><circle cx="560.7" cy="367.3" r="0.9"/><circle cx="614.8" cy="359.9" r="0.9"/><circle cx="532.0" cy="376.3" r="0.9"/><circle cx="557.9" cy="365.8" r="0.9"/><circle cx="595.4" cy="372.9" r="0.9"/><circle cx="520.9" cy="365.4" r="0.9"/><circle cx="576.7" cy="368.7" r="0.9"/><circle cx="547.3" cy="370.9" r="0.9"/><circle cx="644.2" cy="366.6" r="0.9"/><circle cx="590.8" cy="360.6" r="0.9"/><circle cx="555.7" cy="372.6" r="0.9"/><circle cx="534.6" cy="377.5" r="0.9"/><circle cx="638.1" cy="360.1" r="0.9"/><circle cx="642.4" cy="366.2" r="0.9"/></g>
<g clip-path="url(#c2)" fill="none" stroke="#7aaaa0" stroke-width="0.5"><circle cx="620.4" cy="374.7" r="0.7"/><circle cx="558.4" cy="372.9" r="0.7"/><circle cx="605.0" cy="375.7" r="0.7"/><circle cx="554.5" cy="374.6" r="0.7"/><circle cx="645.0" cy="372.8" r="0.7"/><circle cx="589.7" cy="360.5" r="0.7"/><circle cx="584.2" cy="365.7" r="0.7"/><circle cx="613.4" cy="372.9" r="0.7"/><circle cx="593.6" cy="362.0" r="0.7"/><circle cx="603.9" cy="371.9" r="0.7"/><circle cx="543.3" cy="377.6" r="0.7"/><circle cx="605.2" cy="360.7" r="0.7"/><circle cx="641.1" cy="361.1" r="0.7"/><circle cx="563.1" cy="373.9" r="0.7"/><circle cx="597.7" cy="370.2" r="0.7"/><circle cx="604.2" cy="368.1" r="0.7"/><circle cx="560.6" cy="361.9" r="0.7"/><circle cx="528.9" cy="373.7" r="0.7"/><circle cx="618.1" cy="369.9" r="0.7"/><circle cx="616.2" cy="365.9" r="0.7"/><circle cx="554.6" cy="366.4" r="0.7"/><circle cx="633.4" cy="358.9" r="0.7"/><circle cx="585.6" cy="363.4" r="0.7"/><circle cx="620.0" cy="365.8" r="0.7"/><circle cx="563.3" cy="366.9" r="0.7"/><circle cx="590.4" cy="375.0" r="0.7"/><circle cx="565.9" cy="376.6" r="0.7"/><circle cx="534.6" cy="364.0" r="0.7"/><circle cx="533.0" cy="360.5" r="0.7"/><circle cx="621.3" cy="374.0" r="0.7"/><circle cx="544.0" cy="362.2" r="0.7"/><circle cx="574.2" cy="374.4" r="0.7"/><circle cx="626.0" cy="374.5" r="0.7"/><circle cx="596.9" cy="361.2" r="0.7"/><circle cx="571.8" cy="362.3" r="0.7"/><circle cx="588.6" cy="370.5" r="0.7"/><circle cx="546.3" cy="363.5" r="0.7"/><circle cx="621.6" cy="358.7" r="0.7"/><circle cx="624.4" cy="377.6" r="0.7"/><circle cx="643.4" cy="366.4" r="0.7"/><circle cx="591.8" cy="370.8" r="0.7"/><circle cx="602.4" cy="379.5" r="0.7"/><circle cx="609.3" cy="364.6" r="0.7"/><circle cx="631.8" cy="368.6" r="0.7"/><circle cx="598.2" cy="374.0" r="0.7"/><circle cx="520.3" cy="375.0" r="0.7"/><circle cx="606.1" cy="368.8" r="0.7"/><circle cx="588.1" cy="368.1" r="0.7"/><circle cx="545.1" cy="369.7" r="0.7"/><circle cx="524.8" cy="369.0" r="0.7"/><circle cx="604.0" cy="367.8" r="0.7"/><circle cx="593.6" cy="379.1" r="0.7"/><circle cx="636.0" cy="361.0" r="0.7"/><circle cx="623.0" cy="371.7" r="0.7"/><circle cx="526.6" cy="365.9" r="0.7"/><circle cx="550.3" cy="359.7" r="0.7"/><circle cx="590.1" cy="378.5" r="0.7"/><circle cx="562.0" cy="377.2" r="0.7"/><circle cx="610.3" cy="361.0" r="0.7"/><circle cx="631.6" cy="371.2" r="0.7"/><circle cx="640.5" cy="373.8" r="0.7"/><circle cx="616.2" cy="365.6" r="0.7"/><circle cx="624.9" cy="378.5" r="0.7"/><circle cx="632.0" cy="367.6" r="0.7"/><circle cx="618.4" cy="368.7" r="0.7"/><circle cx="534.2" cy="358.9" r="0.7"/><circle cx="530.1" cy="362.4" r="0.7"/><circle cx="540.9" cy="368.9" r="0.7"/><circle cx="610.9" cy="369.8" r="0.7"/><circle cx="574.9" cy="372.3" r="0.7"/><circle cx="559.6" cy="368.2" r="0.7"/><circle cx="618.4" cy="366.8" r="0.7"/><circle cx="543.5" cy="377.8" r="0.7"/><circle cx="613.6" cy="366.1" r="0.7"/><circle cx="568.2" cy="369.6" r="0.7"/><circle cx="597.5" cy="362.9" r="0.7"/><circle cx="520.4" cy="362.6" r="0.7"/><circle cx="621.8" cy="361.2" r="0.7"/><circle cx="579.8" cy="362.3" r="0.7"/><circle cx="547.2" cy="361.8" r="0.7"/><circle cx="572.5" cy="361.7" r="0.7"/><circle cx="523.6" cy="360.4" r="0.7"/><circle cx="541.9" cy="368.8" r="0.7"/><circle cx="527.8" cy="358.5" r="0.7"/><circle cx="578.2" cy="367.0" r="0.7"/><circle cx="611.4" cy="359.1" r="0.7"/><circle cx="572.4" cy="366.7" r="0.7"/><circle cx="523.5" cy="379.2" r="0.7"/><circle cx="548.5" cy="360.1" r="0.7"/><circle cx="581.7" cy="361.6" r="0.7"/><circle cx="600.9" cy="365.6" r="0.7"/><circle cx="536.1" cy="359.1" r="0.7"/><circle cx="614.6" cy="364.1" r="0.7"/><circle cx="622.4" cy="368.2" r="0.7"/><circle cx="641.3" cy="364.6" r="0.7"/><circle cx="552.5" cy="363.8" r="0.7"/><circle cx="625.9" cy="371.8" r="0.7"/><circle cx="564.8" cy="360.1" r="0.7"/><circle cx="608.7" cy="379.3" r="0.7"/><circle cx="597.0" cy="358.1" r="0.7"/><circle cx="523.9" cy="360.0" r="0.7"/><circle cx="542.1" cy="358.8" r="0.7"/><circle cx="527.0" cy="372.4" r="0.7"/><circle cx="637.0" cy="362.4" r="0.7"/><circle cx="646.6" cy="368.5" r="0.7"/><circle cx="624.5" cy="378.2" r="0.7"/><circle cx="642.2" cy="358.8" r="0.7"/><circle cx="559.6" cy="371.4" r="0.7"/><circle cx="643.1" cy="359.9" r="0.7"/><circle cx="558.1" cy="376.7" r="0.7"/></g>
<clipPath id="c4"><polygon points="537.9,396.7 629.8,396.7 627.3,403.8 540.4,403.8"/></clipPath>
<g clip-path="url(#c4)" fill="#d8a898"><circle cx="542.6" cy="399.5" r="0.6"/><circle cx="566.8" cy="401.4" r="0.6"/><circle cx="632.1" cy="398.1" r="0.6"/><circle cx="611.4" cy="401.8" r="0.6"/><circle cx="621.9" cy="400.6" r="0.6"/><circle cx="631.6" cy="399.4" r="0.6"/><circle cx="575.6" cy="398.5" r="0.6"/><circle cx="615.7" cy="400.1" r="0.6"/><circle cx="559.6" cy="398.1" r="0.6"/><circle cx="609.3" cy="400.9" r="0.6"/><circle cx="608.2" cy="399.5" r="0.6"/><circle cx="583.6" cy="398.0" r="0.6"/><circle cx="608.2" cy="397.1" r="0.6"/><circle cx="581.4" cy="401.9" r="0.6"/><circle cx="604.5" cy="397.6" r="0.6"/><circle cx="556.1" cy="402.5" r="0.6"/><circle cx="600.7" cy="402.7" r="0.6"/><circle cx="625.9" cy="399.9" r="0.6"/><circle cx="628.7" cy="401.8" r="0.6"/><circle cx="566.7" cy="399.4" r="0.6"/><circle cx="537.9" cy="399.6" r="0.6"/><circle cx="635.1" cy="397.7" r="0.6"/><circle cx="592.6" cy="397.7" r="0.6"/><circle cx="538.9" cy="401.2" r="0.6"/><circle cx="556.5" cy="397.3" r="0.6"/><circle cx="546.8" cy="401.2" r="0.6"/><circle cx="594.4" cy="397.1" r="0.6"/><circle cx="555.3" cy="403.3" r="0.6"/><circle cx="554.2" cy="400.7" r="0.6"/><circle cx="576.2" cy="402.1" r="0.6"/><circle cx="596.5" cy="402.1" r="0.6"/><circle cx="588.9" cy="398.2" r="0.6"/><circle cx="549.5" cy="397.5" r="0.6"/><circle cx="620.8" cy="397.7" r="0.6"/><circle cx="532.6" cy="403.3" r="0.6"/><circle cx="551.9" cy="402.8" r="0.6"/><circle cx="539.4" cy="400.0" r="0.6"/><circle cx="554.5" cy="402.4" r="0.6"/><circle cx="597.7" cy="401.2" r="0.6"/><circle cx="613.8" cy="402.7" r="0.6"/><circle cx="568.1" cy="400.9" r="0.6"/><circle cx="579.0" cy="397.7" r="0.6"/><circle cx="621.9" cy="400.9" r="0.6"/><circle cx="619.6" cy="398.3" r="0.6"/><circle cx="589.3" cy="400.0" r="0.6"/><circle cx="610.1" cy="397.5" r="0.6"/><circle cx="568.1" cy="400.1" r="0.6"/><circle cx="537.9" cy="400.6" r="0.6"/><circle cx="610.9" cy="399.7" r="0.6"/><circle cx="601.3" cy="400.9" r="0.6"/><circle cx="553.6" cy="399.3" r="0.6"/><circle cx="639.5" cy="399.2" r="0.6"/><circle cx="577.4" cy="397.5" r="0.6"/><circle cx="554.0" cy="398.1" r="0.6"/><circle cx="632.4" cy="401.7" r="0.6"/><circle cx="626.2" cy="403.4" r="0.6"/><circle cx="597.3" cy="403.1" r="0.6"/><circle cx="588.9" cy="399.7" r="0.6"/><circle cx="634.3" cy="402.9" r="0.6"/><circle cx="634.5" cy="400.1" r="0.6"/></g>
<line x1="524.0" y1="357.4" x2="643.7" y2="357.4" stroke="#8a8a6a" stroke-width="0.8"/>
<line x1="532.2" y1="380.4" x2="635.6" y2="380.4" stroke="#8a8a6a" stroke-width="0.8"/>
<line x1="537.9" y1="396.7" x2="629.8" y2="396.7" stroke="#8a8a6a" stroke-width="0.8"/>
<line x1="515" y1="342.3" x2="652" y2="342.3" stroke="#777" stroke-width="1"/>
<line x1="515.3" y1="332.6" x2="540.4" y2="403.8" stroke="#555" stroke-width="1"/>
<line x1="652.5" y1="332.6" x2="627.3" y2="403.8" stroke="#555" stroke-width="1"/>
<path d="M583.3,333 L583.3,338.5 L581.8,341 L584.8,343.5 L583.3,346 L583.3,351" fill="none" stroke="#444" stroke-width="1"/>
<circle cx="584" cy="388.3" r="7.6" fill="#fff" stroke="#555" stroke-width="1"/>
<g stroke="#555" stroke-width="0.8" fill="none">
<polyline points="602,349.7 787,349.7"/>
<polyline points="640,370.3 787,370.3"/>
<polyline points="602,385.6 787,385.6"/>
<polyline points="599.5,400.5 659,408 787,408"/>
<polyline points="602,413 659,420 787,420"/>
</g>
<rect x="540.4" y="403.8" width="86.9" height="16.8" fill="#fff" stroke="#333" stroke-width="1"/>
<g stroke="#111" stroke-width="1.6"><line x1="543.0" y1="407.3" x2="546.2" y2="404.5"/><line x1="543.0" y1="420" x2="546.2" y2="417.2"/><line x1="550.2" y1="407.3" x2="553.4000000000001" y2="404.5"/><line x1="550.2" y1="420" x2="553.4000000000001" y2="417.2"/><line x1="557.4" y1="407.3" x2="560.6" y2="404.5"/><line x1="557.4" y1="420" x2="560.6" y2="417.2"/><line x1="564.6" y1="407.3" x2="567.8000000000001" y2="404.5"/><line x1="564.6" y1="420" x2="567.8000000000001" y2="417.2"/><line x1="571.8" y1="407.3" x2="575.0" y2="404.5"/><line x1="571.8" y1="420" x2="575.0" y2="417.2"/><line x1="579.0" y1="407.3" x2="582.2" y2="404.5"/><line x1="579.0" y1="420" x2="582.2" y2="417.2"/><line x1="586.2" y1="407.3" x2="589.4000000000001" y2="404.5"/><line x1="586.2" y1="420" x2="589.4000000000001" y2="417.2"/><line x1="593.4" y1="407.3" x2="596.6" y2="404.5"/><line x1="593.4" y1="420" x2="596.6" y2="417.2"/><line x1="600.6" y1="407.3" x2="603.8000000000001" y2="404.5"/><line x1="600.6" y1="420" x2="603.8000000000001" y2="417.2"/><line x1="607.8" y1="407.3" x2="611.0" y2="404.5"/><line x1="607.8" y1="420" x2="611.0" y2="417.2"/><line x1="615.0" y1="407.3" x2="618.2" y2="404.5"/><line x1="615.0" y1="420" x2="618.2" y2="417.2"/><line x1="622.2" y1="407.3" x2="625.4000000000001" y2="404.5"/><line x1="622.2" y1="420" x2="625.4000000000001" y2="417.2"/></g>
<path d="M536,413 L541.5,413 M541.5,410.5 L540,415.5" stroke="#444" stroke-width="0.8" fill="none"/>
<path d="M622,413 L631,413 M627.3,410.5 L626,415.5" stroke="#444" stroke-width="0.8" fill="none"/>
<text transform="translate(664,347.5) scale(1,1.25)" class="t" font-size="7.3" textLength="65.5" lengthAdjust="spacing">Природний грунт</text>
<text transform="translate(664,368.5) scale(1,1.25)" class="t" font-size="7.3" textLength="105.7" lengthAdjust="spacing">Вторинна засипка - 200мм</text>
<text transform="translate(663.5,383.8) scale(1,1.25)" class="t" font-size="7.3" textLength="68.8" lengthAdjust="spacing">Первинна засипка</text>
<text transform="translate(663.5,396) scale(1,1.25)" class="t" font-size="7.3" textLength="105.8" lengthAdjust="spacing">(ущільнений пісок) - 110мм</text>
<text transform="translate(663.5,407) scale(1,1.25)" class="t" font-size="7.3" textLength="131.8" lengthAdjust="spacing">Підстилаючий шар (пісок) - 100мм</text>
<text transform="translate(663.5,418.5) scale(1,1.25)" class="t" font-size="7.3" textLength="143" lengthAdjust="spacing">Ущільнений грунт на глибині 1 м до</text>
<text transform="translate(663.5,430) scale(1,1.25)" class="t" font-size="7.3" textLength="139.3" lengthAdjust="spacing">щільності сухого грунту не меньше</text>
<text transform="translate(663.5,441.3) scale(1,1.25)" class="t" font-size="7.3" textLength="102.8" lengthAdjust="spacing">1.65 тс/м3 на нижній межі</text>
<text transform="translate(663.5,452) scale(1,1.25)" class="t" font-size="7.3" textLength="69.5" lengthAdjust="spacing">ущільненого шару</text>
<rect x="36" y="95" width="824" height="18" fill="#d5d5d7"/>
<path d="M463,113 Q467,113 467,109 L467,99 Q467,96 470,96 L593,96 Q596,96 596,99 L596,109 Q596,113 600,113 Z" fill="#f7f7f8"/>
<rect x="36" y="113" width="824" height="43" fill="#f7f7f8"/>
<line x1="36" y1="156.5" x2="860" y2="156.5" stroke="#e2e2e4" stroke-width="1"/>
<circle cx="48" cy="101.8" r="2.6" fill="#8a8a8a"/><path d="M43.5,109.5 Q43.5,104.8 48,104.8 Q52.5,104.8 52.5,109.5 Z" fill="#8a8a8a"/><circle cx="53.4" cy="99.6" r="1.5" fill="#d0103a"/>
<rect x="64.2" y="100.2" width="8" height="8" rx="1.5" fill="none" stroke="#333" stroke-width="1.1"/><line x1="64.2" y1="102.3" x2="72.2" y2="102.3" stroke="#333" stroke-width="1.6"/>
<line x1="83.6" y1="99.5" x2="83.6" y2="109.5" stroke="#aaa" stroke-width="0.8"/>
<path d="M87.5,100.2 h5.5 l2.5,2.5 v6.8 q0,0.8 -0.8,0.8 h-6.4 q-0.8,0 -0.8,-0.8 v-8.5 q0,-0.8 0.8,-0.8z" fill="#e8585a"/>
<rect x="88.5" y="104.6" width="6" height="2.6" fill="#fbd0d0"/>
<text x="100.6" y="107.3" font-size="7.2" fill="#2a2a2a" font-family="Liberation Sans" textLength="25.6" lengthAdjust="spacingAndGlyphs">3BK1.pdf</text>
<path d="M200.8,102.2 l5,5 m0,-5 l-5,5" stroke="#333" stroke-width="0.9"/>
<line x1="211.8" y1="99.5" x2="211.8" y2="109.5" stroke="#aaa" stroke-width="0.8"/>
<path d="M215.3,100.2 h5.5 l2.5,2.5 v6.8 q0,0.8 -0.8,0.8 h-6.4 q-0.8,0 -0.8,-0.8 v-8.5 q0,-0.8 0.8,-0.8z" fill="#e8585a"/>
<rect x="216.3" y="104.6" width="6" height="2.6" fill="#fbd0d0"/>
<text x="228.4" y="107.3" font-size="7.2" fill="#2a2a2a" font-family="Liberation Sans" textLength="25.6" lengthAdjust="spacingAndGlyphs">3BK2.pdf</text>
<path d="M328.6,102.2 l5,5 m0,-5 l-5,5" stroke="#333" stroke-width="0.9"/>
<line x1="339.6" y1="99.5" x2="339.6" y2="109.5" stroke="#aaa" stroke-width="0.8"/>
<path d="M343.1,100.2 h5.5 l2.5,2.5 v6.8 q0,0.8 -0.8,0.8 h-6.4 q-0.8,0 -0.8,-0.8 v-8.5 q0,-0.8 0.8,-0.8z" fill="#e8585a"/>
<rect x="344.1" y="104.6" width="6" height="2.6" fill="#fbd0d0"/>
<text x="356.20000000000005" y="107.3" font-size="7.2" fill="#2a2a2a" font-family="Liberation Sans" textLength="25.6" lengthAdjust="spacingAndGlyphs">3BK3.pdf</text>
<path d="M456.40000000000003,102.2 l5,5 m0,-5 l-5,5" stroke="#333" stroke-width="0.9"/>
<path d="M470.9,100.2 h5.5 l2.5,2.5 v6.8 q0,0.8 -0.8,0.8 h-6.4 q-0.8,0 -0.8,-0.8 v-8.5 q0,-0.8 0.8,-0.8z" fill="#e8585a"/>
<rect x="471.9" y="104.6" width="6" height="2.6" fill="#fbd0d0"/>
<text x="484.0" y="107.3" font-size="7.2" fill="#2a2a2a" font-family="Liberation Sans" textLength="26.6" lengthAdjust="spacingAndGlyphs">3BK5.pdf</text>
<path d="M584.1999999999999,102.2 l5,5 m0,-5 l-5,5" stroke="#333" stroke-width="0.9"/>
<path d="M598.7,100.2 h5.5 l2.5,2.5 v6.8 q0,0.8 -0.8,0.8 h-6.4 q-0.8,0 -0.8,-0.8 v-8.5 q0,-0.8 0.8,-0.8z" fill="#e8585a"/>
<rect x="599.7" y="104.6" width="6" height="2.6" fill="#fbd0d0"/>
<text x="611.8000000000001" y="107.3" font-size="7.2" fill="#2a2a2a" font-family="Liberation Sans" textLength="45.4" lengthAdjust="spacingAndGlyphs">3BKгенплан.pdf</text>
<path d="M712.0,102.2 l5,5 m0,-5 l-5,5" stroke="#333" stroke-width="0.9"/>
<line x1="723.0" y1="99.5" x2="723.0" y2="109.5" stroke="#aaa" stroke-width="0.8"/>
<line x1="339.6" y1="99.5" x2="339.6" y2="109.5" stroke="#aaa" stroke-width="0.8"/>
<path d="M735,100 v9 M730.5,104.5 h9" stroke="#333" stroke-width="1"/>
<line x1="794" y1="104.5" x2="802" y2="104.5" stroke="#333" stroke-width="0.9"/>
<rect x="818.5" y="101" width="7" height="7" rx="1.5" fill="none" stroke="#333" stroke-width="0.9"/>
<path d="M843,101 l7,7 m0,-7 l-7,7" stroke="#333" stroke-width="0.9"/>
<path d="M46,124.5 h10 M50,120.5 l-4,4 4,4" fill="none" stroke="#bbb" stroke-width="1"/>
<path d="M78.7,121.4 A4.6,4.6 0 1 0 79.6,125.4" fill="none" stroke="#333" stroke-width="1.1"/><path d="M77,120 l3,0.8 -0.6,3" fill="none" stroke="#333" stroke-width="1.1"/>
<rect x="91.5" y="115.5" width="694" height="18" rx="9" fill="#fbfbfc" stroke="#e4e4e6" stroke-width="1"/>
<circle cx="104.3" cy="124.5" r="4.2" fill="none" stroke="#555" stroke-width="0.9"/><line x1="104.3" y1="123" x2="104.3" y2="127" stroke="#555" stroke-width="0.9"/><circle cx="104.3" cy="121.6" r="0.5" fill="#555"/>
<text x="113" y="127.3" font-size="7.6" fill="#777" font-family="Liberation Sans" textLength="17.4" lengthAdjust="spacingAndGlyphs">Файл</text>
<line x1="136.5" y1="120" x2="136.5" y2="129" stroke="#999" stroke-width="0.8"/>
<text x="143.7" y="127.8" font-size="8.4" fill="#1e1e1e" font-family="Liberation Sans" textLength="39" lengthAdjust="spacingAndGlyphs">D:/3BK5.pdf</text>
<circle cx="749.8" cy="123.6" r="3" fill="none" stroke="#666" stroke-width="0.9"/><line x1="752" y1="125.8" x2="754.5" y2="128.3" stroke="#666" stroke-width="1"/><line x1="748.3" y1="123.6" x2="751.3" y2="123.6" stroke="#666" stroke-width="0.7"/>
<path d="M773,119.5 l1.4,3 3.2,0.3 -2.4,2.1 0.7,3.2 -2.9,-1.7 -2.9,1.7 0.7,-3.2 -2.4,-2.1 3.2,-0.3z" fill="none" stroke="#444" stroke-width="0.9"/>
<path d="M799.5,119.5 l1.4,3 3.2,0.3 -2.4,2.1 0.7,3.2 -2.9,-1.7 -2.9,1.7 0.7,-3.2 -2.4,-2.1 3.2,-0.3z" fill="none" stroke="#333" stroke-width="0.9"/><path d="M803.5,126 h3 M803.5,128 h3" stroke="#333" stroke-width="0.7"/>
<circle cx="822" cy="123.5" r="0.75" fill="#333"/><circle cx="824.3" cy="123.5" r="0.75" fill="#333"/><circle cx="829.4" cy="127.6" r="3.1" fill="#d0202a"/><path d="M829.4,126 v3.2" stroke="#fff" stroke-width="0.7"/>
<g transform="translate(847.7,124)"><path d="M-5,-1 Q-5,-5.5 -1,-5.5 L1,-5.5 Q3,-5.5 2,-3 L-1,4 Q-2,5.5 -3.5,5 Q-5,4.5 -5,2z" fill="#2f8ff3"/><path d="M-4.5,3 Q-4,5.6 -1,5.6 L2,5.6 L0,1 z" fill="#3cc070"/><path d="M5,1 Q5,5.5 1,5.5 L-1,5.5 Q-3,5.5 -2,3 L1,-4 Q2,-5.5 3.5,-5 Q5,-4.5 5,-2z" fill="#e8407a"/><path d="M1.5,-5.5 L3.5,-5.5 Q5,-5 5,-2.5 L2,-1z" fill="#f0a030"/><path d="M-2,0 L2,0" stroke="#9a5ae0" stroke-width="2.5"/></g>
<path d="M45.5,142.5 h1 M45.5,145.5 h1 M45.5,148.5 h1 M48,142.5 h7 M48,145.5 h7 M48,148.5 h7" stroke="#5a5a5a" stroke-width="0.9"/>
<line x1="62.8" y1="140.5" x2="62.8" y2="150.5" stroke="#ccc" stroke-width="0.8"/>
<path d="M68,141.5 l1.5,4.5 h5.5 l1.5,-4.5 M69.5,146.0 v4 h5.5 v-4" fill="none" stroke="#5a5a5a" stroke-width="0.9"/>
<path d="M85.5,144.5 l2,2 2,-2" fill="none" stroke="#777" stroke-width="0.8"/>
<path d="M104.5,141.5 h9 l-4.5,8z" fill="none" stroke="#5a5a5a" stroke-width="0.9"/>
<text x="120.2" y="148.3" font-size="7.8" fill="#3a3a3a" font-family="Liberation Sans" textLength="41" lengthAdjust="spacingAndGlyphs">Нарисовать</text>
<path d="M169.5,144.5 l2,2 2,-2" fill="none" stroke="#777" stroke-width="0.8"/>
<path d="M186,147.0 l5,-5 3.5,3.5 -5,5 h-2z M185.5,150.0 h9" fill="none" stroke="#5a5a5a" stroke-width="0.9"/>
<line x1="202.3" y1="140.5" x2="202.3" y2="150.5" stroke="#ccc" stroke-width="0.8"/>
<text x="210" y="148.8" font-size="9" fill="#333" font-family="Liberation Sans">A</text><text x="216" y="145.0" font-size="5" fill="#333" font-family="Liberation Sans">&#7485;</text>
<line x1="226.9" y1="140.5" x2="226.9" y2="150.5" stroke="#ccc" stroke-width="0.8"/>
<text x="233.5" y="148.5" font-size="8.5" fill="#333" font-family="Liberation Sans">ab</text>
<line x1="373.3" y1="145.5" x2="380" y2="145.5" stroke="#666" stroke-width="0.9"/>
<path d="M395.3,142.3 v6.4 M392.1,145.5 h6.4" stroke="#666" stroke-width="0.9"/>
<rect x="410" y="142.0" width="9" height="7" rx="1" fill="none" stroke="#5a5a5a" stroke-width="0.9"/><path d="M412,145.5 h5 M413,144.5 l-1,1 1,1 M416,144.5 l1,1 -1,1" fill="none" stroke="#5a5a5a" stroke-width="0.7"/>
<line x1="427.9" y1="140.5" x2="427.9" y2="150.5" stroke="#ccc" stroke-width="0.8"/>
<rect x="430.8" y="137.5" width="20.5" height="16.4" rx="2" fill="#fff" stroke="#dcdcdc" stroke-width="0.8"/>
<text x="439" y="148.3" font-size="7.8" fill="#222" font-family="Liberation Sans">1</text>
<text x="456.5" y="148.1" font-size="7.2" fill="#333" font-family="Liberation Sans" textLength="12.6" lengthAdjust="spacingAndGlyphs">из 1</text>
<line x1="475.7" y1="140.5" x2="475.7" y2="150.5" stroke="#ccc" stroke-width="0.8"/>
<path d="M484.5,144.0 A4.2,4.2 0 1 1 488.3,149.7" fill="none" stroke="#5a5a5a" stroke-width="0.9"/><path d="M483,142.0 l1.5,2 2,-1.5" fill="none" stroke="#5a5a5a" stroke-width="0.9"/><circle cx="488.3" cy="145.5" r="0.8" fill="#5a5a5a"/>
<line x1="500" y1="140.5" x2="500" y2="150.5" stroke="#ccc" stroke-width="0.8"/>
<rect x="507.5" y="141.5" width="8" height="8" rx="1" fill="none" stroke="#bbb" stroke-width="0.9"/><line x1="511.5" y1="141.5" x2="511.5" y2="149.5" stroke="#bbb" stroke-width="0.8"/>
<circle cx="729.8" cy="144.7" r="3.2" fill="none" stroke="#333" stroke-width="1"/><line x1="732.2" y1="147.1" x2="735" y2="149.9" stroke="#333" stroke-width="1.1"/>
<line x1="743" y1="140.5" x2="743" y2="150.5" stroke="#ccc" stroke-width="0.8"/>
<path d="M751.5,144.0 h9 q1,0 1,1 v3.5 h-11 v-3.5 q0,-1 1,-1z M753,144.0 v-3 h6 v3 M753,148.0 v2.5 h6 v-2.5" fill="none" stroke="#333" stroke-width="0.9"/>
<path d="M770.5,141.5 h6 l2.5,2.5 v5.5 h-8.5z" fill="none" stroke="#aaa" stroke-width="0.9"/>
<path d="M789.5,141.5 h6 l2.5,2.5 v5.5 h-8.5z" fill="none" stroke="#333" stroke-width="0.9"/><path d="M792,149.5 l5,-5 1.5,1.5 -5,5z" fill="#333"/>
<line x1="806.7" y1="140.5" x2="806.7" y2="150.5" stroke="#ccc" stroke-width="0.8"/>
<path d="M814,149.5 l8,-8 M814,149.5 v-3 M814,149.5 h3 M822,141.5 h-3 M822,141.5 v3" fill="none" stroke="#333" stroke-width="0.9"/>
<circle cx="837" cy="145.5" r="1.6" fill="none" stroke="#333" stroke-width="0.9"/><path d="M837,140.9 l1.3,0.6 1.9,-0.6 0.6,1.9 1.4,1.2 -0.5,1.5 0.5,1.5 -1.4,1.2 -0.6,1.9 -1.9,-0.6 -1.3,0.6 -1.3,-0.6 -1.9,0.6 -0.6,-1.9 -1.4,-1.2 0.5,-1.5 -0.5,-1.5 1.4,-1.2 0.6,-1.9 1.9,0.6z" fill="none" stroke="#333" stroke-width="0.8"/>
<path d="M850.3,143.5 l2.6,-2.6 2.6,2.6z" fill="#555"/>
<rect x="851.3" y="147.5" width="3.4" height="252" rx="1.7" fill="#8a8a8a"/>
<path d="M850.3,526.5 l2.6,2.6 2.6,-2.6z" fill="#555"/>
<path d="M342,130.5 v9 l2,-2 1.5,3.2 1.3,-0.6 -1.5,-3.1 h3z" fill="#fff" stroke="#333" stroke-width="0.7"/>
</svg>
<rect x="0" y="534.5" width="898" height="21.5" fill="#3c3c3c"/>
<g transform="translate(20,542.5)"><rect x="-1.8" y="-5" width="3.6" height="6.5" rx="1.8" fill="#fff"/><path d="M-3.2,-0.5 q0,4 3.2,4 q3.2,0 3.2,-4 M0,3.5 v2" fill="none" stroke="#fff" stroke-width="0.8"/><line x1="-3.5" y1="-5" x2="3.5" y2="5" stroke="#e0203a" stroke-width="1.4"/><circle cx="1" cy="-1" r="4.2" fill="#e0203a" opacity="0.35"/></g>
<path d="M30.4,543.5 l1.6,-1.6 1.6,1.6" fill="none" stroke="#ccc" stroke-width="0.7"/>
<text x="19.5" y="554.3" font-size="4.8" fill="#b8b8b8" font-family="Liberation Sans" text-anchor="middle">Звук</text>
<g transform="translate(57,542.5)"><rect x="-5" y="-3.5" width="7" height="6" rx="1" fill="none" stroke="#fff" stroke-width="0.8"/><path d="M2,-1.5 l3,-2 v6 l-3,-2" fill="none" stroke="#fff" stroke-width="0.8"/><line x1="-5" y1="-4.5" x2="5" y2="4.5" stroke="#e0203a" stroke-width="1.4"/><circle cx="1" cy="-1" r="4.2" fill="#e0203a" opacity="0.35"/></g>
<path d="M69.4,543.5 l1.6,-1.6 1.6,1.6" fill="none" stroke="#ccc" stroke-width="0.7"/>
<text x="57" y="554.3" font-size="4.8" fill="#b8b8b8" font-family="Liberation Sans" text-anchor="middle">Видео</text>
<g transform="translate(345,543.2)" fill="none" stroke="#e6e6e6" stroke-width="0.8"><circle cx="-1.5" cy="-2" r="1.8"/><path d="M-4.5,3.2 q0,-3.2 3,-3.2 q3,0 3,3.2z"/><circle cx="2.5" cy="-2.5" r="1.4"/><path d="M2.5,0 q2.5,0 2.5,3"/></g>
<text x="352" y="542" font-size="4.6" fill="#ddd" font-family="Liberation Sans">11</text>
<path d="M364.9,543.5 l1.6,-1.6 1.6,1.6" fill="none" stroke="#ccc" stroke-width="0.7"/>
<text x="345" y="554.3" font-size="4.8" fill="#b8b8b8" font-family="Liberation Sans" text-anchor="middle">Участники</text>
<g transform="translate(389,543.2)" fill="none" stroke="#e6e6e6" stroke-width="0.8"><rect x="-4" y="-2.5" width="5.5" height="5" rx="1.5"/><rect x="-1.5" y="-4.5" width="5.5" height="5" rx="1.5"/></g>
<path d="M399.9,543.5 l1.6,-1.6 1.6,1.6" fill="none" stroke="#ccc" stroke-width="0.7"/>
<text x="389" y="554.3" font-size="4.8" fill="#b8b8b8" font-family="Liberation Sans" text-anchor="middle">Чат</text>
<path d="M427,546 l-3.8,-3.5 q-1.5,-2.2 0.4,-3.6 q1.8,-1 3.4,0.8 q1.6,-1.8 3.4,-0.8 q1.9,1.4 0.4,3.6z" fill="none" stroke="#e6e6e6" stroke-width="0.8"/>
<path d="M440.0,543.5 l1.6,-1.6 1.6,1.6" fill="none" stroke="#ccc" stroke-width="0.7"/>
<text x="427" y="554.3" font-size="4.8" fill="#b8b8b8" font-family="Liberation Sans" text-anchor="middle">Отреагировать</text>
<rect x="462" y="538.8" width="9" height="8.6" rx="1.2" fill="#19c26a"/><path d="M466.5,545.5 v-4.6 M464.5,542.8 l2,-2 2,2" fill="none" stroke="#fff" stroke-width="0.8"/>
<text x="466.5" y="554.3" font-size="4.8" fill="#b8b8b8" font-family="Liberation Sans" text-anchor="middle">Поделиться</text>
<circle cx="513.4" cy="543.2" r="4.2" fill="none" stroke="#e6e6e6" stroke-width="0.8"/><path d="M513.4,542.2 v3 M513.4,540.9 v0.5" stroke="#e6e6e6" stroke-width="0.8"/>
<text x="513.4" y="554.3" font-size="4.8" fill="#b8b8b8" font-family="Liberation Sans" text-anchor="middle">Данные конференции</text>
<g transform="translate(558.8,543.2)" fill="none" stroke="#e6e6e6" stroke-width="0.8"><path d="M-4.5,-2 v-2.5 h2.5 M2,-4.5 h2.5 v2.5 M4.5,2 v2.5 h-2.5 M-2,4.5 h-2.5 v-2.5"/><circle cx="0" cy="0" r="1.3"/></g>
<text x="558.8" y="554.3" font-size="4.8" fill="#b8b8b8" font-family="Liberation Sans" text-anchor="middle">Приложения</text>
<circle cx="598.3" cy="543.2" r="4.3" fill="none" stroke="#e6e6e6" stroke-width="0.8"/><path d="M596.3,543.2 h0.6 M598,543.2 h0.6 M599.7,543.2 h0.6" stroke="#e6e6e6" stroke-width="0.9"/>
<text x="598.3" y="554.3" font-size="4.8" fill="#b8b8b8" font-family="Liberation Sans" text-anchor="middle">Дополнительно</text>
<g transform="translate(876,542.5)"><circle cx="2" cy="-0.5" r="4.5" fill="#d0203a" opacity="0.4"/><path d="M-2.5,-4 l2.5,-1 2.5,1 -0.5,3 2,3 -1,1 -3,-1.5 -3,1.5 -1,-1 2,-3z" fill="#f0f0f0"/></g>
<text x="876" y="554.3" font-size="4.8" fill="#b8b8b8" font-family="Liberation Sans" text-anchor="middle">Выйти</text>
<rect x="898" y="17" width="126" height="539" fill="#1f1f1f"/>
<rect x="898" y="17" width="1.6" height="539" fill="#2c2c2c"/>
<text x="951.5" y="28.2" font-size="5.4" fill="#f2f2f2" font-family="Liberation Sans" font-weight="bold" text-anchor="middle">Участники (10)</text>
<rect x="1004.8" y="23.2" width="5.4" height="5.4" rx="1" fill="none" stroke="#aaa" stroke-width="0.7"/><path d="M1007.5,25.8 l3.5,-3.5 M1009,22.3 h2 v2" fill="none" stroke="#aaa" stroke-width="0.7"/>
<path d="M1016.5,23.5 l4.2,4.2 m0,-4.2 l-4.2,4.2" stroke="#aaa" stroke-width="0.7"/>
<rect x="905.3" y="39.6" width="114" height="12" rx="2.5" fill="#1f1f1f" stroke="#4c4c4c" stroke-width="0.8"/>
<circle cx="911" cy="45" r="2" fill="none" stroke="#999" stroke-width="0.7"/><line x1="912.4" y1="46.4" x2="913.6" y2="47.6" stroke="#999" stroke-width="0.7"/>
<text x="916" y="47.6" font-size="5.1" fill="#9a9a9a" font-family="Liberation Sans">Найти участника</text>
<rect x="906.5" y="55.5" width="10.8" height="10.6" rx="2.5" fill="#b146c2"/>
<text x="911.9" y="63.0" font-size="6" fill="#fff" font-family="Liberation Sans" text-anchor="middle">В</text>
<text x="922" y="62.699999999999996" font-size="5.15" fill="#dedede" font-family="Liberation Sans">Вячеслав Бойцховський (Я)</text>
<g transform="translate(1006.7,60.8)"><rect x="-0.9" y="-3" width="1.8" height="4" rx="0.9" fill="#b02e40"/><path d="M-2,0 q0,2.2 2,2.2 q2,0 2,-2.2" fill="none" stroke="#b02e40" stroke-width="0.6"/><line x1="-2.4" y1="-3.2" x2="2.4" y2="3.2" stroke="#b02e40" stroke-width="0.8"/></g>
<g transform="translate(1016.5,60.8)" fill="none" stroke="#b02e40" stroke-width="0.7"><rect x="-3" y="-2.2" width="4.2" height="4.4" rx="0.6"/><path d="M1.2,-1 l2,-1.2 v4.4 l-2,-1.2"/><line x1="-3.3" y1="-3" x2="3.3" y2="3"/></g>
<rect x="906.5" y="72.0" width="10.8" height="10.6" rx="2.5" fill="#f37200"/>
<text x="911.9" y="79.5" font-size="6" fill="#fff" font-family="Liberation Sans" text-anchor="middle">I</text>
<text x="922" y="79.2" font-size="5.15" fill="#dedede" font-family="Liberation Sans">Михайло Ку...</text>
<text x="958.3" y="79.2" font-size="5.15" fill="#dedede" font-family="Liberation Sans" textLength="34" lengthAdjust="spacingAndGlyphs">(Организатор)</text>
<rect x="994" y="74.7" width="7" height="5.2" rx="0.8" fill="#2fbf55"/><rect x="995.5" y="76.0" width="4" height="2.6" fill="#e8ffe8" opacity="0.8"/>
<rect x="1005.8" y="74.3" width="1.8" height="4.5" rx="0.9" fill="#bbb"/>
<g transform="translate(1016.5,77.3)" fill="none" stroke="#b02e40" stroke-width="0.7"><rect x="-3" y="-2.2" width="4.2" height="4.4" rx="0.6"/><path d="M1.2,-1 l2,-1.2 v4.4 l-2,-1.2"/><line x1="-3.3" y1="-3" x2="3.3" y2="3"/></g>
<rect x="906.5" y="88.5" width="10.8" height="10.6" rx="2.5" fill="#2fae55"/>
<text x="911.9" y="96.0" font-size="6" fill="#fff" font-family="Liberation Sans" text-anchor="middle">В</text>
<text x="922" y="95.7" font-size="5.15" fill="#dedede" font-family="Liberation Sans">Влад Моисеев</text>
<g transform="translate(1006.7,93.8)"><rect x="-0.9" y="-3" width="1.8" height="4" rx="0.9" fill="#b02e40"/><path d="M-2,0 q0,2.2 2,2.2 q2,0 2,-2.2" fill="none" stroke="#b02e40" stroke-width="0.6"/><line x1="-2.4" y1="-3.2" x2="2.4" y2="3.2" stroke="#b02e40" stroke-width="0.8"/></g>
<g transform="translate(1016.5,93.8)" fill="none" stroke="#b02e40" stroke-width="0.7"><rect x="-3" y="-2.2" width="4.2" height="4.4" rx="0.6"/><path d="M1.2,-1 l2,-1.2 v4.4 l-2,-1.2"/><line x1="-3.3" y1="-3" x2="3.3" y2="3"/></g>
<rect x="906.5" y="105.0" width="10.8" height="10.6" rx="2.5" fill="#2fae55"/>
<text x="911.9" y="112.5" font-size="6" fill="#fff" font-family="Liberation Sans" text-anchor="middle">Г</text>
<text x="922" y="112.2" font-size="5.15" fill="#dedede" font-family="Liberation Sans">Головань О.С.</text>
<g transform="translate(1006.7,110.3)"><rect x="-0.9" y="-3" width="1.8" height="4" rx="0.9" fill="#b02e40"/><path d="M-2,0 q0,2.2 2,2.2 q2,0 2,-2.2" fill="none" stroke="#b02e40" stroke-width="0.6"/><line x1="-2.4" y1="-3.2" x2="2.4" y2="3.2" stroke="#b02e40" stroke-width="0.8"/></g>
<g transform="translate(1016.5,110.3)" fill="none" stroke="#b02e40" stroke-width="0.7"><rect x="-3" y="-2.2" width="4.2" height="4.4" rx="0.6"/><path d="M1.2,-1 l2,-1.2 v4.4 l-2,-1.2"/><line x1="-3.3" y1="-3" x2="3.3" y2="3"/></g>
<rect x="906.5" y="121.5" width="10.8" height="10.6" rx="2.5" fill="#4b5b78"/>
<text x="911.9" y="129.0" font-size="6" fill="#fff" font-family="Liberation Sans" text-anchor="middle">Л</text>
<text x="922" y="128.7" font-size="5.15" fill="#dedede" font-family="Liberation Sans">Липський Євген БАД-113СП</text>
<g transform="translate(1006.7,126.8)"><rect x="-0.9" y="-3" width="1.8" height="4" rx="0.9" fill="#b02e40"/><path d="M-2,0 q0,2.2 2,2.2 q2,0 2,-2.2" fill="none" stroke="#b02e40" stroke-width="0.6"/><line x1="-2.4" y1="-3.2" x2="2.4" y2="3.2" stroke="#b02e40" stroke-width="0.8"/></g>
<g transform="translate(1016.5,126.8)" fill="none" stroke="#b02e40" stroke-width="0.7"><rect x="-3" y="-2.2" width="4.2" height="4.4" rx="0.6"/><path d="M1.2,-1 l2,-1.2 v4.4 l-2,-1.2"/><line x1="-3.3" y1="-3" x2="3.3" y2="3"/></g>
<rect x="906.5" y="138.0" width="10.8" height="10.6" rx="2.5" fill="#6b4a3f"/>
<text x="911.9" y="145.5" font-size="6" fill="#fff" font-family="Liberation Sans" text-anchor="middle">А</text>
<text x="922" y="145.20000000000002" font-size="5.15" fill="#dedede" font-family="Liberation Sans">Марченко Альона БАД-112</text>
<g transform="translate(1006.7,143.3)"><rect x="-0.9" y="-3" width="1.8" height="4" rx="0.9" fill="#b02e40"/><path d="M-2,0 q0,2.2 2,2.2 q2,0 2,-2.2" fill="none" stroke="#b02e40" stroke-width="0.6"/><line x1="-2.4" y1="-3.2" x2="2.4" y2="3.2" stroke="#b02e40" stroke-width="0.8"/></g>
<g transform="translate(1016.5,143.3)" fill="none" stroke="#b02e40" stroke-width="0.7"><rect x="-3" y="-2.2" width="4.2" height="4.4" rx="0.6"/><path d="M1.2,-1 l2,-1.2 v4.4 l-2,-1.2"/><line x1="-3.3" y1="-3" x2="3.3" y2="3"/></g>
<rect x="906.5" y="154.5" width="10.8" height="10.6" rx="2.5" fill="url(#ph2)"/>
<text x="922" y="161.70000000000002" font-size="5.15" fill="#dedede" font-family="Liberation Sans">Михаил Кулик</text>
<g transform="translate(1006.7,159.8)"><rect x="-0.9" y="-3" width="1.8" height="4" rx="0.9" fill="#b02e40"/><path d="M-2,0 q0,2.2 2,2.2 q2,0 2,-2.2" fill="none" stroke="#b02e40" stroke-width="0.6"/><line x1="-2.4" y1="-3.2" x2="2.4" y2="3.2" stroke="#b02e40" stroke-width="0.8"/></g>
<g transform="translate(1016.5,159.8)" fill="none" stroke="#b02e40" stroke-width="0.7"><rect x="-3" y="-2.2" width="4.2" height="4.4" rx="0.6"/><path d="M1.2,-1 l2,-1.2 v4.4 l-2,-1.2"/><line x1="-3.3" y1="-3" x2="3.3" y2="3"/></g>
<rect x="906.5" y="171.0" width="10.8" height="10.6" rx="2.5" fill="#8a2bb2"/>
<text x="911.9" y="178.5" font-size="6" fill="#fff" font-family="Liberation Sans" text-anchor="middle">R</text>
<text x="922" y="178.20000000000002" font-size="5.15" fill="#dedede" font-family="Liberation Sans">Олег Бедькал</text>
<g transform="translate(1006.7,176.3)"><rect x="-0.9" y="-3" width="1.8" height="4" rx="0.9" fill="#b02e40"/><path d="M-2,0 q0,2.2 2,2.2 q2,0 2,-2.2" fill="none" stroke="#b02e40" stroke-width="0.6"/><line x1="-2.4" y1="-3.2" x2="2.4" y2="3.2" stroke="#b02e40" stroke-width="0.8"/></g>
<g transform="translate(1016.5,176.3)" fill="none" stroke="#b02e40" stroke-width="0.7"><rect x="-3" y="-2.2" width="4.2" height="4.4" rx="0.6"/><path d="M1.2,-1 l2,-1.2 v4.4 l-2,-1.2"/><line x1="-3.3" y1="-3" x2="3.3" y2="3"/></g>
<rect x="906.5" y="187.5" width="10.8" height="10.6" rx="2.5" fill="#6d2cb8"/>
<text x="911.9" y="195.0" font-size="6" fill="#fff" font-family="Liberation Sans" text-anchor="middle">П</text>
<text x="922" y="194.70000000000002" font-size="5.15" fill="#dedede" font-family="Liberation Sans">Поліна Залевська</text>
<g transform="translate(1006.7,192.8)"><rect x="-0.9" y="-3" width="1.8" height="4" rx="0.9" fill="#b02e40"/><path d="M-2,0 q0,2.2 2,2.2 q2,0 2,-2.2" fill="none" stroke="#b02e40" stroke-width="0.6"/><line x1="-2.4" y1="-3.2" x2="2.4" y2="3.2" stroke="#b02e40" stroke-width="0.8"/></g>
<g transform="translate(1016.5,192.8)" fill="none" stroke="#b02e40" stroke-width="0.7"><rect x="-3" y="-2.2" width="4.2" height="4.4" rx="0.6"/><path d="M1.2,-1 l2,-1.2 v4.4 l-2,-1.2"/><line x1="-3.3" y1="-3" x2="3.3" y2="3"/></g>
<rect x="906.5" y="204.0" width="10.8" height="10.6" rx="2.5" fill="#f2a21e"/>
<text x="911.9" y="211.5" font-size="6" fill="#fff" font-family="Liberation Sans" text-anchor="middle">С</text>
<text x="922" y="211.20000000000002" font-size="5.15" fill="#dedede" font-family="Liberation Sans">Сергей Щербина БАД 122</text>
<g transform="translate(1006.7,209.3)"><rect x="-0.9" y="-3" width="1.8" height="4" rx="0.9" fill="#b02e40"/><path d="M-2,0 q0,2.2 2,2.2 q2,0 2,-2.2" fill="none" stroke="#b02e40" stroke-width="0.6"/><line x1="-2.4" y1="-3.2" x2="2.4" y2="3.2" stroke="#b02e40" stroke-width="0.8"/></g>
<g transform="translate(1016.5,209.3)" fill="none" stroke="#b02e40" stroke-width="0.7"><rect x="-3" y="-2.2" width="4.2" height="4.4" rx="0.6"/><path d="M1.2,-1 l2,-1.2 v4.4 l-2,-1.2"/><line x1="-3.3" y1="-3" x2="3.3" y2="3"/></g>
<defs><linearGradient id="ph2" x1="0" y1="0" x2="0" y2="1"><stop offset="0" stop-color="#8a9098"/><stop offset="0.5" stop-color="#6a6a66"/><stop offset="1" stop-color="#7a6e5a"/></linearGradient></defs>
<rect x="911" y="543.4" width="35.5" height="8.8" rx="1.8" fill="#232323" stroke="#555" stroke-width="0.7"/>
<text x="928.7" y="549.8" font-size="5" fill="#e8e8e8" font-family="Liberation Sans" text-anchor="middle">Пригласить</text>
<rect x="957.8" y="543.4" width="56" height="8.8" rx="1.8" fill="#232323" stroke="#555" stroke-width="0.7"/>
<text x="985.8" y="549.8" font-size="5" fill="#e8e8e8" font-family="Liberation Sans" text-anchor="middle">Включить свой звук</text>
</svg>
</body></html>
